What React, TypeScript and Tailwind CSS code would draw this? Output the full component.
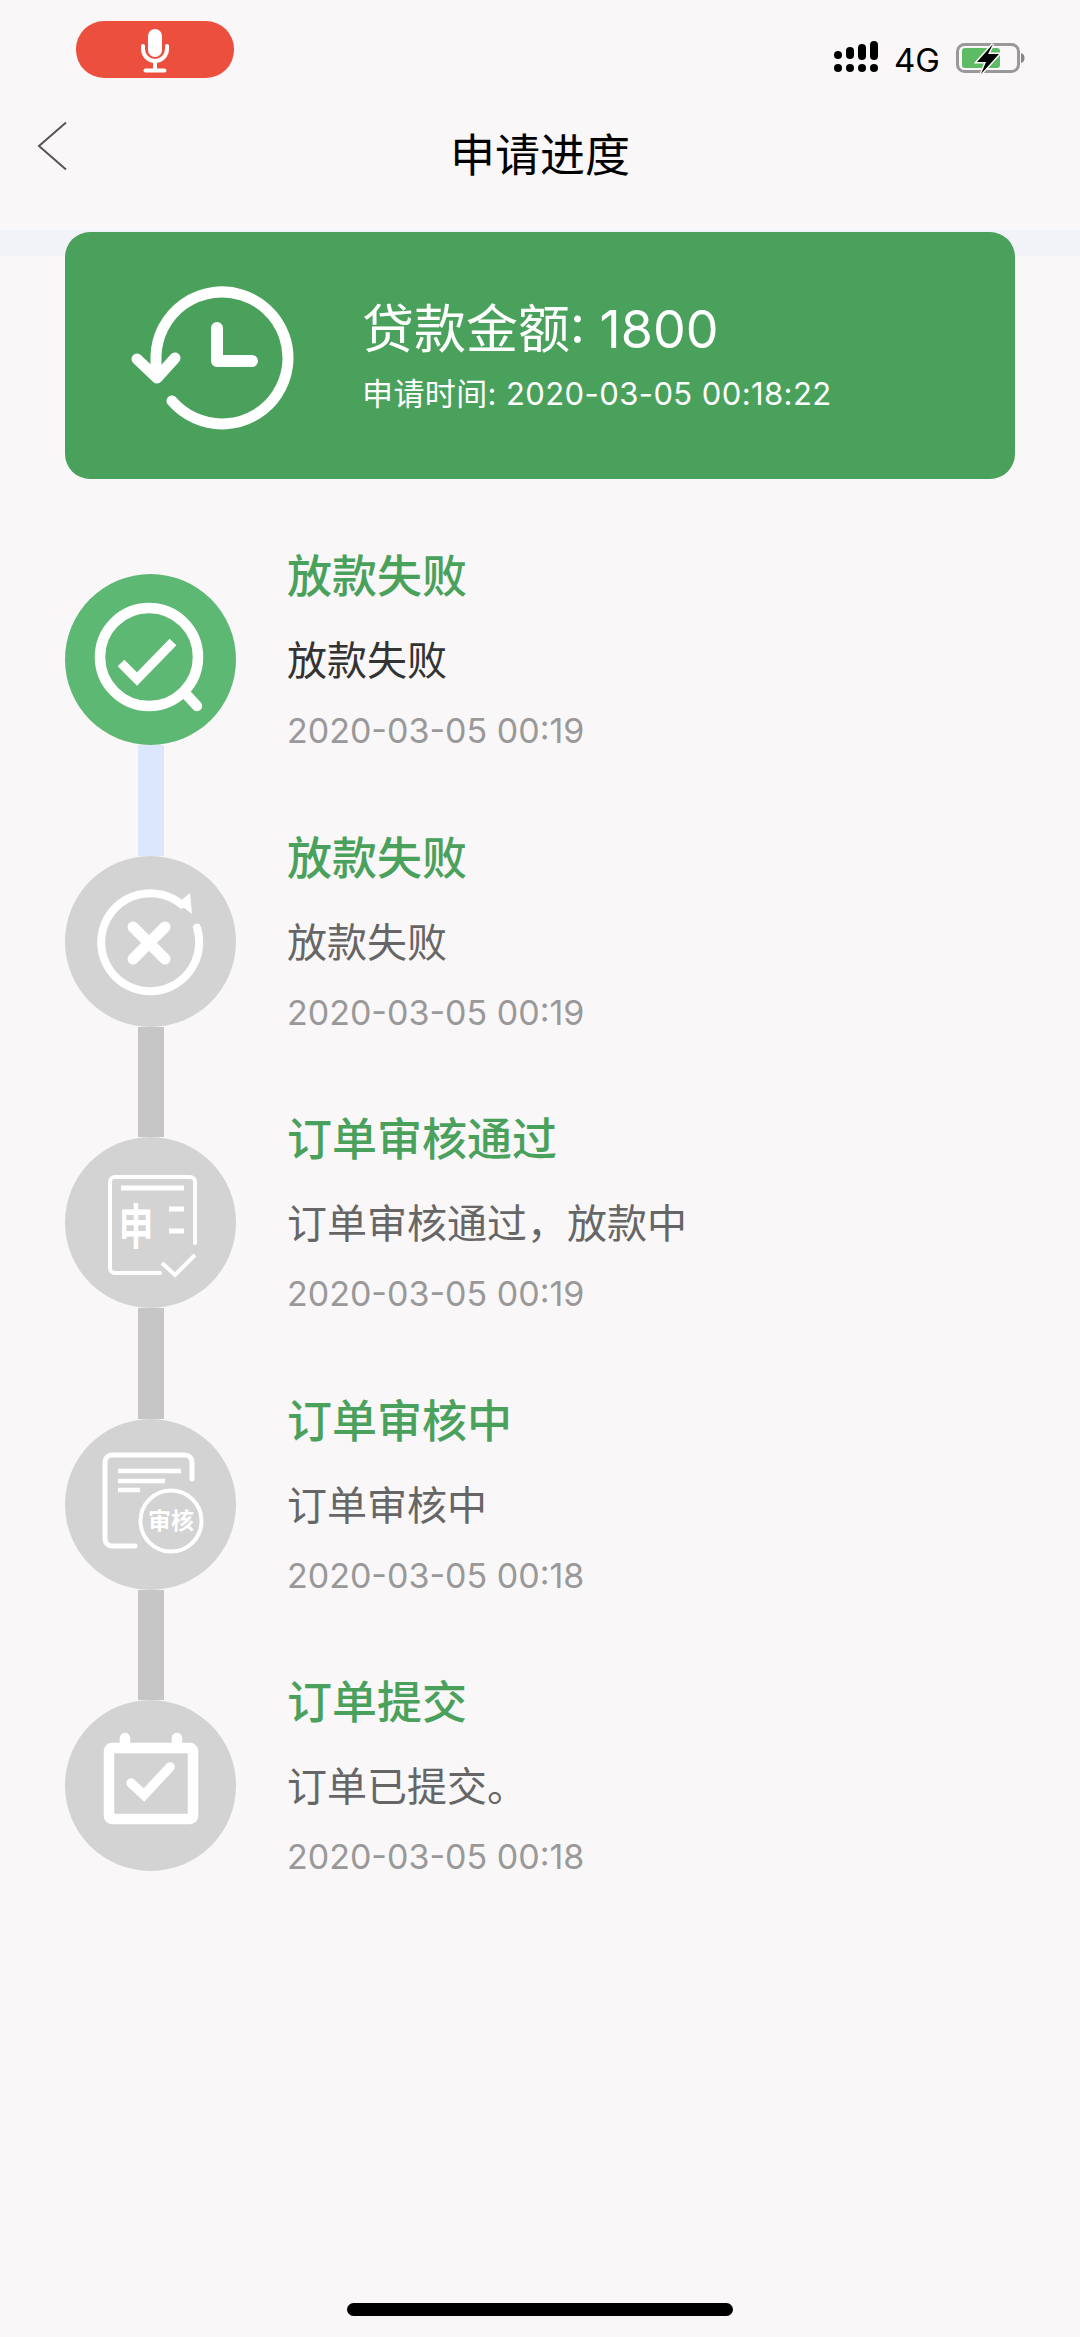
const cjk = "font-['Inter','Noto_Sans_CJK_SC',sans-serif]";

const SignalIcon = () => (
  <svg width="46" height="34" viewBox="0 0 46 34" fill="#000">
    <rect x="0" y="10" width="8" height="8" rx="4" />
    <rect x="12" y="6" width="8" height="12" rx="4" />
    <rect x="24" y="3" width="8" height="16" rx="4" />
    <rect x="36" y="0" width="8" height="19" rx="4" />
    <circle cx="4" cy="27" r="4" />
    <circle cx="16" cy="27" r="4" />
    <circle cx="28" cy="27" r="4" />
    <circle cx="40" cy="27" r="4" />
  </svg>
);

const BatteryIcon = () => (
  <svg width="70" height="36" viewBox="0 0 70 36">
    <rect x="1.500" y="4.500" width="61" height="27" rx="7" fill="none" stroke="#999" strokeWidth="3" />
    <rect x="6" y="8" width="38" height="20" rx="3" fill="#5dbb63" />
    <path d="M65 13c2.500.5 3.500 2.500 3.500 5s-1 4.500-3.500 5z" fill="#888" />
    <path d="M37 4 21 22h9l-5 12 18-20H32z" fill="#000" stroke="#f9f7f8" strokeWidth="3" paintOrder="stroke" />
  </svg>
);

const MicIcon = () => (
  <svg width="30" height="46" viewBox="0 0 30 46" fill="none" stroke="#fff">
    <rect x="8" y="2" width="14" height="28" rx="7" fill="#fff" stroke="none" />
    <path d="M3 19v3a12 12 0 0 0 24 0v-3" strokeWidth="4" strokeLinecap="round" />
    <path d="M15 34v8" strokeWidth="4" />
    <path d="M5.500 43.500h19" strokeWidth="4" strokeLinecap="round" />
  </svg>
);

const HistoryIcon = () => (
  <svg width="180" height="160" viewBox="0 0 180 160" fill="none" stroke="#fff" strokeWidth="11" strokeLinecap="round" strokeLinejoin="round">
    <path d="M47 125A66 66 0 1 0 31 80v20" />
    <path d="M12 83l20 19 18-20" />
    <path d="M92 52v33h35" strokeWidth="12" />
  </svg>
);

const SearchCheckIcon = () => (
  <svg width="171" height="171" viewBox="0 0 171 171" fill="none" stroke="#fff" strokeWidth="10.500">
    <circle cx="84" cy="83" r="49" />
    <path d="M120 119l12 13" strokeLinecap="round" />
    <path d="M56 89l16 16 36-37" strokeWidth="9.500" />
  </svg>
);

const RetryCloseIcon = () => (
  <svg width="171" height="171" viewBox="0 0 171 171" fill="none" stroke="#fff" strokeWidth="8">
    <path d="M132 71.700A49 49 0 1 1 116.500 48.500" strokeLinecap="round" />
    <path d="M125 37l2 21-14-11z" fill="#fff" stroke="none" />
    <path d="M68 71l32 32M100 71l-32 32" strokeWidth="11" strokeLinecap="round" />
  </svg>
);

const ApplyIcon = () => (
  <svg width="171" height="171" viewBox="0 0 171 171" fill="none" stroke="#fff" strokeWidth="4">
    <g transform="translate(0 1)">
      <path d="M95 135H50a5 5 0 0 1-5-5V44a5 5 0 0 1 5-5h75a5 5 0 0 1 5 5v61" strokeLinecap="round" />
      <path d="M56 50h63M104 71h15M104 93h15" strokeWidth="5" />
      <path d="M97 125l13 12 20-20" />
      <text x="0" y="0" transform="translate(71 106) scale(.72 1)" textAnchor="middle" fontSize="48" fontWeight="700" fill="#fff" stroke="none" fontFamily="'Noto Sans CJK SC',sans-serif">申</text>
    </g>
  </svg>
);

const ReviewIcon = () => (
  <svg width="171" height="171" viewBox="0 0 171 171" fill="none" stroke="#fff" strokeWidth="5">
    <path d="M70 127H47a7 7 0 0 1-7-7V43a7 7 0 0 1 7-7h73a7 7 0 0 1 7 7v17" strokeLinecap="round" />
    <path d="M53 52h63M53 62h47M53 71h22" strokeWidth="4.500" />
    <circle cx="106" cy="102" r="30.500" strokeWidth="4" />
    <text x="106" y="110" textAnchor="middle" fontSize="23" fontWeight="700" fill="#fff" stroke="none" fontFamily="'Noto Sans CJK SC',sans-serif">审核</text>
  </svg>
);

const CalendarCheckIcon = () => (
  <svg width="171" height="171" viewBox="0 0 171 171" fill="none" stroke="#fff" strokeWidth="10.500" strokeLinecap="round">
    <rect x="44" y="48" width="84" height="71" rx="3" />
    <path d="M60 38v8M112 38v8" />
    <path d="M66 83l13 12 26-28" strokeWidth="9.500" />
  </svg>
);

const steps = [
  { title: '放款失败', desc: '放款失败', time: '2020-03-05 00:19', Icon: SearchCheckIcon, active: true },
  { title: '放款失败', desc: '放款失败', time: '2020-03-05 00:19', Icon: RetryCloseIcon, active: false },
  { title: '订单审核通过', desc: '订单审核通过，放款中', time: '2020-03-05 00:19', Icon: ApplyIcon, active: false },
  { title: '订单审核中', desc: '订单审核中', time: '2020-03-05 00:18', Icon: ReviewIcon, active: false },
  { title: '订单提交', desc: '订单已提交。', time: '2020-03-05 00:18', Icon: CalendarCheckIcon, active: false },
];

export default function App() {
  return (
    <div className={`flex h-[2337px] w-[1080px] flex-col overflow-hidden bg-[#f9f7f8] ${cjk}`}>
      {/* status bar */}
      <div className="flex h-[100px] justify-between pl-[76px] pr-[54px]">
        <div className="mt-[21px] flex h-[57px] w-[158px] items-center justify-center rounded-[28px] bg-[#ec4f3e]">
          <MicIcon />
        </div>
        <div className="mt-[40px] flex h-[36px] items-center">
          <SignalIcon />
          <span className="ml-[14px] mr-[16px] mt-[3px] text-[33px] leading-[36px] text-black">4G</span>
          <BatteryIcon />
        </div>
      </div>

      {/* nav */}
      <div className="relative flex h-[106px] items-center justify-center">
        <svg className="absolute left-[36px] top-[21px]" width="32" height="50" viewBox="0 0 32 50" fill="none" stroke="#555" strokeWidth="2">
          <path d="M30 1.500 3 25l27 23.500" />
        </svg>
        <span className="mt-[5px] text-[45px] leading-[60px] text-black">申请进度</span>
      </div>

      <div className="mt-[24px] h-[26px] bg-[#f2f3f8]" />

      {/* summary card */}
      <div className="relative -mt-[24px] ml-[65px] flex h-[247px] w-[950px] items-center rounded-[25px] bg-[#4aa15c] pl-[60px]">
        <HistoryIcon />
        <div className="ml-[57px] text-white">
          <div className="mt-[2px] text-[52px] leading-[66px]">贷款金额: 1800</div>
          <div className="mt-[9px] text-[31px] leading-[44px] tracking-[0.4px]">申请时间: 2020-03-05 00:18:22</div>
        </div>
      </div>

      {/* timeline */}
      <div className="ml-[65px] mt-[95px]">
        {steps.map((s, i) => (
          <div key={i} className="flex">
            <div className="flex w-[171px] flex-col items-center">
              <div className={`h-[171px] w-[171px] rounded-full ${s.active ? 'bg-[#5db873]' : 'bg-[#d3d3d3]'}`}>
                <s.Icon />
              </div>
              {i < steps.length - 1 && (
                <div className={`h-[110.500px] w-[26px] ${s.active ? 'bg-[#dce7fb]' : 'bg-[#c6c6c6]'}`} />
              )}
            </div>
            <div className="ml-[51px] -mt-[27px]">
              <div className="text-[45px] font-medium leading-[60px] text-[#4aa15c]">{s.title}</div>
              <div className={`mt-[24px] text-[40px] leading-[60px] ${s.active ? 'text-[#333333]' : 'text-[#666666]'}`}>{s.desc}</div>
              <div className="mt-[18px] text-[34px] leading-[44px] text-[#999999]">{s.time}</div>
            </div>
          </div>
        ))}
      </div>

      {/* home indicator */}
      <div className="mb-[21px] mt-auto h-[13px] w-[386px] self-center rounded-full bg-black" />
    </div>
  );
}
